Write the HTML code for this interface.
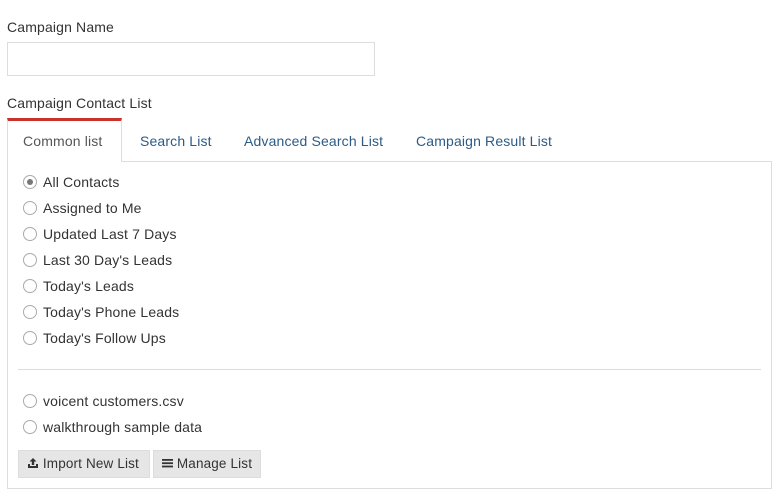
<!DOCTYPE html>
<html><head><style>
*{box-sizing:border-box;margin:0;padding:0}
body{width:780px;height:492px;background:#fff;font-family:"Liberation Sans",sans-serif;font-size:14px;color:#333;position:relative;overflow:hidden;letter-spacing:0.15px}
.a{position:absolute;white-space:nowrap}
.r{position:absolute;left:23px;width:14px;height:14px;border:1px solid #aaa;border-radius:50%;background:#fff}
.r.on::after{content:"";position:absolute;left:3px;top:3px;width:6px;height:6px;border-radius:50%;background:#777}
.l{position:absolute;left:43px;line-height:18px;white-space:nowrap}
.tab{position:absolute;top:132px;color:#2d5b86;line-height:18px;white-space:nowrap}
.btn{position:absolute;top:450px;height:28px;background:#e6e6e6;border:1px solid #ddd;line-height:26px;font-size:13.5px;color:#333;padding-left:8px;white-space:nowrap}
</style></head><body>
<div class="a" style="left:7px;top:18px;line-height:18px">Campaign Name</div>
<div class="a" style="left:7px;top:42px;width:368px;height:34px;border:1px solid #ddd"></div>
<div class="a" style="left:7px;top:94px;line-height:18px">Campaign Contact List</div>
<div class="a" style="left:7px;top:161px;width:765px;height:328px;border:1px solid #ddd"></div>
<div class="a" style="left:7px;top:118px;width:115px;height:44px;border:1px solid #ddd;border-bottom:none;border-top:3px solid #c8322a;background:#fff"></div>
<div class="tab" style="left:23px;color:#555">Common list</div>
<div class="tab" style="left:140px">Search List</div>
<div class="tab" style="left:244px">Advanced Search List</div>
<div class="tab" style="left:416px">Campaign Result List</div>

<div class="r on" style="top:175px"></div><div class="l" style="top:173px">All Contacts</div>
<div class="r" style="top:201px"></div><div class="l" style="top:199px">Assigned to Me</div>
<div class="r" style="top:227px"></div><div class="l" style="top:225px">Updated Last 7 Days</div>
<div class="r" style="top:253px"></div><div class="l" style="top:251px">Last 30 Day's Leads</div>
<div class="r" style="top:279px"></div><div class="l" style="top:277px">Today's Leads</div>
<div class="r" style="top:305px"></div><div class="l" style="top:303px">Today's Phone Leads</div>
<div class="r" style="top:331px"></div><div class="l" style="top:329px">Today's Follow Ups</div>
<div class="a" style="left:18px;top:369px;width:743px;height:1px;background:#ddd"></div>
<div class="r" style="top:394px"></div><div class="l" style="top:392px">voicent customers.csv</div>
<div class="r" style="top:420px"></div><div class="l" style="top:418px">walkthrough sample data</div>

<div class="btn" style="left:18px;width:132px">
<svg width="12" height="12" viewBox="0 0 12 12" style="vertical-align:-1px"><path d="M6 1L2.5 4.5H4.8V8H7.2V4.5H9.5Z M1 7V11H11V7H9V9H3V7Z" fill="#333"/></svg> Import New List</div>
<div class="btn" style="left:153px;width:108px">
<svg width="11" height="10" viewBox="0 0 11 10" style="vertical-align:0"><rect x="0" y="1" width="11" height="1.8" fill="#333"/><rect x="0" y="4.3" width="11" height="1.8" fill="#333"/><rect x="0" y="7.6" width="11" height="1.8" fill="#333"/></svg> Manage List</div>
</body></html>
